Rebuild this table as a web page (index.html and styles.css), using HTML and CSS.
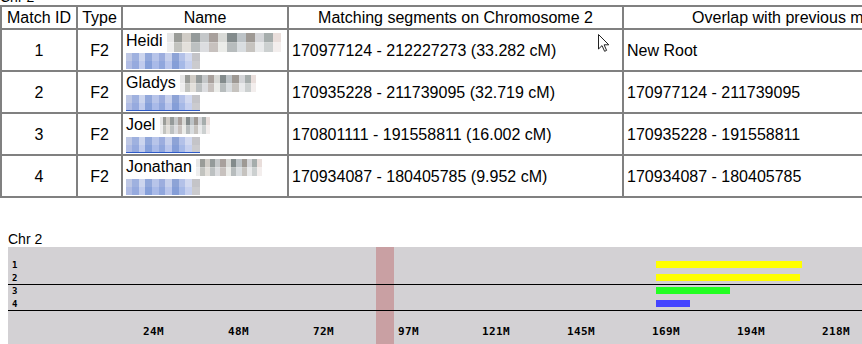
FILE: index.html
```html
<!DOCTYPE html>
<html lang="en">
<head>
<meta charset="utf-8">
<title>Chr 2 matches</title>
<link rel="stylesheet" href="styles.css">
</head>
<body>
<div class="top-label">Chr 2</div>
<table class="matches">
  <thead>
    <tr>
      <th class="c-id">Match ID</th>
      <th class="c-type">Type</th>
      <th class="c-name">Name</th>
      <th class="c-seg">Matching segments on Chromosome 2</th>
      <th class="c-ov">Overlap with previous match</th>
    </tr>
  </thead>
  <tbody>
    <tr>
      <td class="num">1</td>
      <td class="num">F2</td>
      <td class="name"><span class="line">Heidi <span class="blur surname s1"></span></span><span class="line"><span class="blur link l1"></span></span></td>
      <td>170977124 - 212227273 (33.282 cM)</td>
      <td>New Root</td>
    </tr>
    <tr>
      <td class="num">2</td>
      <td class="num">F2</td>
      <td class="name"><span class="line">Gladys <span class="blur surname s2"></span></span><span class="line"><span class="blur link l2 ul"></span></span></td>
      <td>170935228 - 211739095 (32.719 cM)</td>
      <td>170977124 - 211739095</td>
    </tr>
    <tr>
      <td class="num">3</td>
      <td class="num">F2</td>
      <td class="name"><span class="line">Joel <span class="blur surname s3"></span></span><span class="line"><span class="blur link l3 ul"></span></span></td>
      <td>170801111 - 191558811 (16.002 cM)</td>
      <td>170935228 - 191558811</td>
    </tr>
    <tr>
      <td class="num">4</td>
      <td class="num">F2</td>
      <td class="name"><span class="line">Jonathan <span class="blur surname s4"></span></span><span class="line"><span class="blur link l4"></span></span></td>
      <td>170934087 - 180405785 (9.952 cM)</td>
      <td>170934087 - 180405785</td>
    </tr>
  </tbody>
</table>

<section class="chr">
  <div class="chr-title">Chr 2</div>
  <div class="chart">
    <div class="centromere" style="left:368px;width:18px"></div>
    <div class="group">
      <div class="lane"><span class="lane-id">1</span><span class="bar yellow" style="left:648px;width:146px"></span></div>
      <div class="lane"><span class="lane-id">2</span><span class="bar yellow" style="left:648px;width:144px"></span></div>
    </div>
    <div class="group">
      <div class="lane"><span class="lane-id">3</span><span class="bar green" style="left:648px;width:74px"></span></div>
      <div class="lane"><span class="lane-id">4</span><span class="bar blue" style="left:648px;width:34px"></span></div>
    </div>
    <div class="axis">
      <span class="tick" style="left:135px">24M</span>
      <span class="tick" style="left:220px">48M</span>
      <span class="tick" style="left:305px">72M</span>
      <span class="tick" style="left:390px">97M</span>
      <span class="tick" style="left:474px">121M</span>
      <span class="tick" style="left:559px">145M</span>
      <span class="tick" style="left:644px">169M</span>
      <span class="tick" style="left:729px">194M</span>
      <span class="tick" style="left:814px">218M</span>
    </div>
  </div>
</section>

<svg class="cursor" width="13" height="19" viewBox="0 0 13 19" aria-hidden="true">
  <path d="M0.5 0.5 V15 L4 11.6 L6.6 17.3 L8.6 16.4 L6.1 10.8 H10.8 Z" fill="#fff" stroke="#222" stroke-width="1" stroke-linejoin="miter"/>
</svg>
</body>
</html>
```

FILE: styles.css
```css
html, body {
  margin: 0;
  padding: 0;
  overflow: hidden;
  background: #fff;
  color: #000;
  font-family: "Liberation Sans", Arial, sans-serif;
}

.top-label {
  font-size: 14px;
  line-height: 15px;
  height: 15px;
  margin-top: -10px;
}

.matches {
  table-layout: fixed;
  width: 964px;
  border-collapse: separate;
  border-spacing: 0;
  border: 1px solid #808080;
  font-size: 16px;
  line-height: 19px;
}

.matches th,
.matches td {
  box-sizing: border-box;
  border: 1px solid #808080;
  padding: 1px 3px;
  white-space: nowrap;
  overflow: hidden;
}

.matches th {
  font-weight: normal;
  text-align: center;
}

.matches td {
  height: 42px;
  text-align: left;
  vertical-align: middle;
}

.c-id { width: 76px; }
.c-type { width: 45px; }
.c-name { width: 166px; }
.c-seg { width: 335px; }
.c-ov { width: 340px; }

.matches td.num {
  text-align: center;
}

.matches td.name {
  padding-right: 1px;
  vertical-align: top;
}

.name .line {
  display: block;
  height: 19px;
}

.blur {
  display: inline-block;
  height: 17px;
  vertical-align: -4px;
}

.surname {
  background:
    linear-gradient(90deg, #e6e6e6 0 6%, #9a9c98 6% 13%, #d0ccc6 13% 21%, #949a9a 21% 29%, #c4c7c9 29% 37%, #a8a09c 37% 45%, #d8d9d6 45% 53%, #838b8c 53% 61%, #bdc3c7 61% 69%, #9e9994 69% 77%, #d4d5d8 77% 85%, #a6adac 85% 93%, #e9dedb 93% 100%) top / 100% 50% no-repeat,
    linear-gradient(90deg, #eeeeee 0 6%, #c2c3bf 6% 13%, #e3e0db 13% 21%, #bcc0c1 21% 29%, #dcdde0 29% 37%, #c7c1be 37% 45%, #ebece9 45% 53%, #b7bcbd 53% 61%, #d9dde0 61% 69%, #c6c3bf 69% 77%, #e9eaeb 77% 85%, #ccd0d0 85% 93%, #f3eeed 93% 100%) bottom / 100% 50% no-repeat;
}

.s1 { width: 114px; height: 19px; vertical-align: -6px; }
.s2 { width: 76px; }
.s3 { width: 50px; }
.s4 { width: 66px; }

.link {
  width: 74px;
  height: 16px;
  background:
    linear-gradient(90deg, #bec7e4 0 8%, #9fb1df 8% 17%, #ccd5ee 17% 26%, #92a8db 26% 35%, #b7c4e9 35% 44%, #9cadde 44% 53%, #c7d0ec 53% 62%, #8da3d6 62% 71%, #b3c1e8 71% 80%, #d2d9f0 80% 89%, #c4c4c8 89% 100%) top / 100% 50% no-repeat,
    linear-gradient(90deg, #b0bce4 0 8%, #96aade 8% 17%, #c0cbed 17% 26%, #86a0da 26% 35%, #a9bae8 35% 44%, #91a7dd 44% 53%, #bac6ec 53% 62%, #859ed7 62% 71%, #a6b9e7 71% 80%, #c6d0ef 80% 89%, #cbcbce 89% 100%) bottom / 100% 50% no-repeat;
}

.link.ul {
  box-shadow: inset 0 -1px 0 #2f5bc8;
}

/* chromosome chart */
.chr {
  margin-top: 34px;
  margin-left: 8px;
}

.chr-title {
  font-size: 14px;
  line-height: 15px;
}

.chart {
  position: relative;
  box-sizing: border-box;
  width: 900px;
  height: 110px;
  padding-top: 12px;
  background: #d3d1d4;
}

.centromere {
  position: absolute;
  top: 0;
  bottom: 0;
  background: #c9a0a3;
}

.group {
  position: relative;
  z-index: 1;
  border-bottom: 1px solid #000;
}

.lane {
  position: relative;
  height: 13px;
}

.lane + .lane {
  height: 12px;
}

.lane-id {
  display: block;
  padding-left: 4px;
  font-family: "DejaVu Sans Mono", monospace;
  font-weight: bold;
  font-size: 9px;
  line-height: 12px;
}

.bar {
  position: absolute;
  top: 2px;
  height: 7px;
}

.yellow { background: #ffff00; }
.green { background: #22ff22; }
.blue { background: #4444ff; }

.axis {
  position: relative;
  z-index: 1;
  height: 40px;
}

.tick {
  position: absolute;
  top: 14px;
  font-family: "DejaVu Sans Mono", monospace;
  font-weight: bold;
  font-size: 11px;
  line-height: 13px;
  letter-spacing: 0.4px;
}

.cursor {
  position: absolute;
  left: 598px;
  top: 34px;
}
```
